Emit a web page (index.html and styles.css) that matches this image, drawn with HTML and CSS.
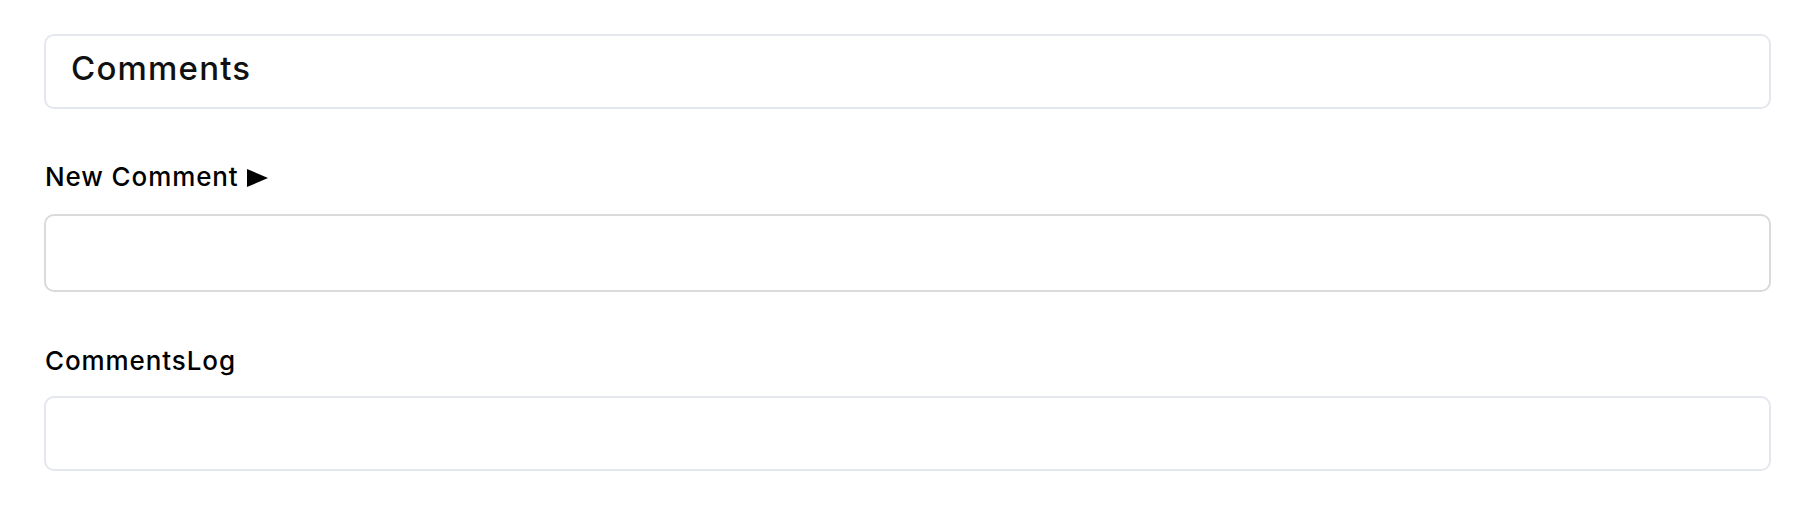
FILE: index.html
```html
<!DOCTYPE html>
<html lang="en">
<head>
<meta charset="utf-8">
<title>Comments</title>
<link rel="stylesheet" href="styles.css">
</head>
<body>
<main class="page">
  <header class="card-header">
    <h1 class="title">Comments</h1>
  </header>
  <section class="field field-new">
    <label class="field-label" for="new-comment">New Comment<svg class="arrow" width="21" height="18" viewBox="0 0 21 18" aria-hidden="true"><polygon points="0,0 21,9 0,18" fill="#000"/></svg></label>
    <div class="input-box input-new" id="new-comment"></div>
  </section>
  <section class="field field-log">
    <label class="field-label">CommentsLog</label>
    <div class="input-box input-log"></div>
  </section>
</main>
</body>
</html>
```
FILE: styles.css
```css
* { box-sizing: border-box; }
html, body { margin: 0; padding: 0; background: #ffffff; }
body {
  font-family: Inter, "Noto Sans", "Liberation Sans", sans-serif;
  color: #111111;
}
.page {
  padding: 34px 45px 0 44px;
  display: flex;
  flex-direction: column;
}
.card-header {
  height: 75px;
  border: 2px solid #e4e7ee;
  border-radius: 10px;
  display: flex;
  align-items: center;
  padding: 0 0 7px 25px;
}
.title {
  margin: 0;
  font-size: 33px;
  font-weight: 500;
  line-height: 40px;
  letter-spacing: 1.2px;
}
.field { display: flex; flex-direction: column; }
.field-new { margin-top: 52px; }
.field-log { margin-top: 53px; }
.field-label {
  display: flex;
  align-items: flex-start;
  font-size: 26px;
  font-weight: 500;
  line-height: 31px;
  letter-spacing: 0.9px;
  padding-left: 1px;
  color: #000000;
}
.arrow {
  margin-top: 8px;
  margin-left: 8px;
  flex: none;
}
.input-box {
  border: 2px solid #e4e7ee;
  border-radius: 10px;
  background: #ffffff;
}
.input-new {
  margin-top: 22px;
  height: 78px;
  border-color: #dadada;
}
.input-log {
  margin-top: 20px;
  height: 75px;
}
```
